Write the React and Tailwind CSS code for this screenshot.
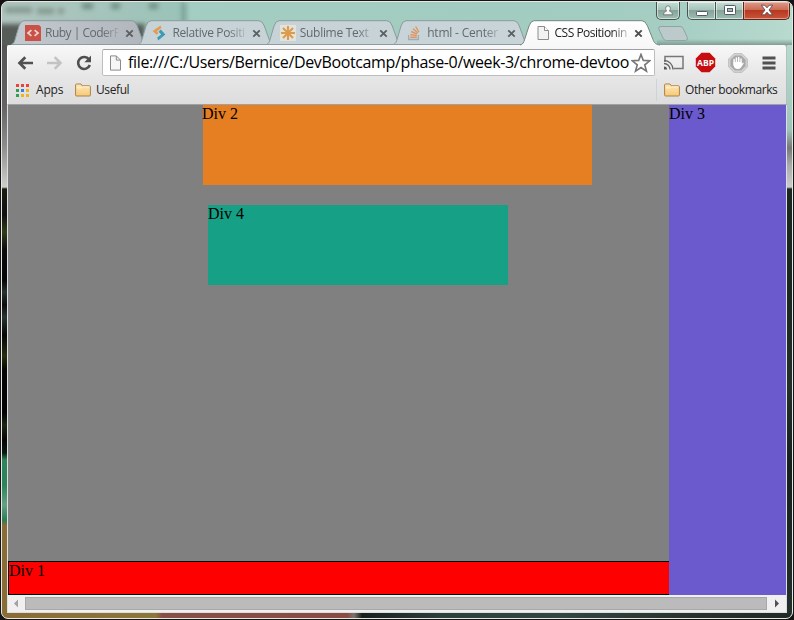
import React from "react";

const UI = "font-['Open_Sans','Noto_Sans',sans-serif]";

function CodeIcon() {
  return (
    <svg width="16" height="16" viewBox="0 0 16 16" className="shrink-0">
      <path d="M0 0H14L16 2V16H0Z" fill="#cb5146" />
      <path d="M6.4 5.2L3 8L6.4 10.8M9.6 5.2L13 8L9.6 10.8" fill="none" stroke="#e8d5d5" strokeWidth="1.7" />
    </svg>
  );
}
function PenIcon() {
  return (
    <svg width="16" height="16" viewBox="0 0 16 16" className="shrink-0">
      <path d="M8.6 .4L.6 6L4.6 9.8L6.4 8L5 6.2L9.4 3Z" fill="#e69a4e" />
      <path d="M8.8 4.6L13.4 9.4L6.2 15.4L5.2 12.6L9.2 9.6L6.6 6.8Z" fill="#3d9ab2" />
    </svg>
  );
}
function AsteriskIcon() {
  return (
    <svg width="16" height="16" viewBox="0 0 16 16" className="shrink-0">
      <rect width="16" height="16" fill="#e4e3d9" />
      <path d="M8 1V15M1 8H15M3 3L13 13M13 3L3 13" stroke="#dc9b4d" strokeWidth="2.1" />
    </svg>
  );
}
function StackIcon() {
  return (
    <svg width="16" height="16" viewBox="0 0 16 16" fill="none" className="shrink-0">
      <path d="M1.6 10V14.5H11.4V10" stroke="#a5aaad" strokeWidth="1.3" />
      <path d="M3.2 12.3H9.8M3.4 9.5L9.8 10.6M4.2 6.5L10 9.2M6 3.7L10.9 8.1M8.6 1.5L11.9 7" stroke="#df9561" strokeWidth="1.4" />
    </svg>
  );
}
function PageIcon() {
  return (
    <svg width="16" height="16" viewBox="0 0 16 16" className="shrink-0">
      <path d="M3 1.5H9.5L13.5 5.5V14.5H3Z" fill="#f3f3f3" stroke="#8c8c8c" />
      <path d="M9.5 1.5V5.5H13.5" fill="#fff" stroke="#8c8c8c" />
    </svg>
  );
}
function FolderIcon() {
  return (
    <svg width="16" height="14" viewBox="0 0 16 14">
      <defs>
        <linearGradient id="folder" x1="0" y1="0" x2="0" y2="1">
          <stop offset="0" stopColor="#ffe8b8" />
          <stop offset="1" stopColor="#f5ca78" />
        </linearGradient>
      </defs>
      <path d="M.6 12V2Q.6 1 1.6 1H6L7.2 2.8H14.4Q15.4 2.8 15.4 3.8V12Q15.4 13 14.4 13H1.6Q.6 13 .6 12Z" fill="url(#folder)" stroke="#ad8148" />
      <path d="M1.6 4.8H6.5L7.8 3.9H14.4" fill="none" stroke="#fff4d8" />
    </svg>
  );
}
function Cross({ active }) {
  return (
    <svg width="9" height="9" viewBox="0 0 9 9" className="shrink-0">
      <path d="M1.3 1.3L7.7 7.7M7.7 1.3L1.3 7.7" stroke={active ? "#4d4d4d" : "#5b6062"} strokeWidth="1.9" />
    </svg>
  );
}

const tabs = [
  { title: "Ruby | CoderF", Icon: CodeIcon, fill: "url(#tabGrey)", tracking: "tracking-[-0.5px]" },
  { title: "Relative Positi", Icon: PenIcon, fill: "#c7d3d7", tracking: "tracking-[-0.34px]" },
  { title: "Sublime Text", Icon: AsteriskIcon, fill: "#c7d3d7", tracking: "tracking-[-0.3px]" },
  { title: "html - Center", Icon: StackIcon, fill: "#c8d4d8", tracking: "tracking-[-0.2px]" },
  { title: "CSS Positionin", Icon: PageIcon, fill: "url(#tabActive)", tracking: "tracking-[-0.5px]", active: true },
];

function Tab({ title, Icon, fill, tracking, active }) {
  const side = "M-1 25C2 24.5 2.8 22 3.6 19.5L8 6Q9.8.7 13 .7H121Q124.5.7 126.5 6L132 19.5C133 22.5 134.5 24.5 139 25";
  const idle = "M.5 24.5C3 23.5 3.4 21.5 4.2 19L8 6Q9.8.7 13 .7H121Q124.5.7 126.3 6L131 19C132 22 133 24 136 24.5Z";
  return (
    <div className={"relative flex h-[25px] w-[127.4px] shrink-0 items-center pl-[14px] pt-[1px] " + (active ? "z-10" : "")}>
      <svg className="absolute left-0 top-0 overflow-visible" width="138" height="25" viewBox="0 0 138 25">
        <defs>
          <linearGradient id="tabGrey"><stop offset="0" stopColor="#c2c9cf" /><stop offset="1" stopColor="#b1b6bc" /></linearGradient>
          <linearGradient id="tabActive" x1="0" y1="0" x2="0" y2="1"><stop offset="0" stopColor="#fff" /><stop offset="1" stopColor="#f8f8f8" /></linearGradient>
        </defs>
        <path d={active ? side : idle} fill={fill} stroke={active ? "#748781" : "#8b9b9f"} />
      </svg>
      <div className="relative flex w-full items-center">
        <Icon />
        <span className={"ml-[4px] w-[73px] shrink-0 whitespace-nowrap text-[12px] leading-[18px] [mask-image:linear-gradient(to_right,#000_78%,rgba(0,0,0,0.2))] " + tracking + (active ? " text-[#222]" : " text-[#626a6e]")}>
          {title}
        </span>
        <span className="ml-[6.5px] flex"><Cross active={active} /></span>
      </div>
    </div>
  );
}

function WindowButtons() {
  const glass = "flex h-[18px] items-center justify-center border-[#46544f] bg-[linear-gradient(#c4ddd5_0%,#a7c5bb_45%,#86a399_50%,#9dbdb3_100%)] shadow-[inset_0_0_0_1px_rgba(255,255,255,0.55)]";
  return (
    <div className="flex h-[18px] justify-end pr-[2px]">
      <div className={glass + " mr-[7px] w-[24px] rounded-b-[5px] border border-t-0"}>
        <svg width="12" height="12" viewBox="0 0 12 12">
          <path d="M3.6 3.4Q3.6 .8 6 .8Q8.4 .8 8.4 3.4Q8.4 4.8 7.6 5.5V6.2Q10.6 6.6 10.6 9.8H1.4Q1.4 6.6 4.4 6.2V5.5Q3.6 4.8 3.6 3.4Z" fill="#f7f7f7" stroke="#616c68" strokeWidth=".8" />
        </svg>
      </div>
      <div className={glass + " w-[29px] rounded-bl-[5px] border border-t-0"}>
        <svg width="14" height="12" viewBox="0 0 14 12"><rect x="1.5" y="6.5" width="11" height="4" rx=".8" fill="#fff" stroke="#525c65" /></svg>
      </div>
      <div className={glass + " w-[27px] border-b"}>
        <svg width="14" height="12" viewBox="0 0 14 12">
          <rect x="1.5" y=".5" width="11" height="9" rx=".8" fill="#fff" stroke="#525c65" />
          <rect x="4.5" y="3.5" width="5" height="3" fill="#a4bdb6" stroke="#525c65" />
        </svg>
      </div>
      <div className="flex h-[18px] w-[47px] items-center justify-center rounded-br-[5px] border border-t-0 border-[#5b2620] bg-[linear-gradient(#dc9c8c_0%,#cd6c55_45%,#b83820_50%,#c9543a_100%)] pb-px shadow-[inset_0_0_0_1px_rgba(255,220,205,0.5)]">
        <svg width="14" height="12" viewBox="0 0 14 12">
          <path d="M1.3 1.2H4.7L7 3.8L9.3 1.2H12.7L9 6L12.7 10.8H9.3L7 8.2L4.7 10.8H1.3L5 6Z" fill="#fff" stroke="#5a4a50" strokeWidth=".9" />
        </svg>
      </div>
    </div>
  );
}

function Toolbar() {
  return (
    <div className="flex h-[32px] items-center pt-[3px]">
      <svg className="ml-[9px] mr-px shrink-0" width="84" height="20" viewBox="0 0 84 20" fill="none">
        <path d="M16 10H2.5M8.3 4.2L2.5 10L8.3 15.8" stroke="#505050" strokeWidth="2.7" />
        <path d="M30 10H43.5M37.7 4.2L43.5 10L37.7 15.8" stroke="#c3c3c3" strokeWidth="2.5" />
        <path d="M72 6.4A6 6 0 1 0 72.8 12" stroke="#505050" strokeWidth="2.6" />
        <path d="M74 2.6V9.3H67.3Z" fill="#505050" />
      </svg>
      <div className="flex h-[27px] w-[553px] shrink-0 items-center rounded-[2px] border border-[#bdbdbd] border-t-[#a0a0a0] bg-white pl-[4px]">
        <svg width="16" height="16" viewBox="0 0 16 16" className="shrink-0">
          <path d="M3.5 .9H9.3L13.5 5.1V15.1H3.5Z" fill="#f7f7f7" stroke="#8a8a8a" />
          <path d="M9.3 1V5.1H13.4" fill="none" stroke="#8a8a8a" />
        </svg>
        <span className="mb-[2px] ml-[5px] w-[503px] shrink-0 whitespace-nowrap text-[16px] leading-[22px] tracking-[-0.36px] text-black">
          file:///C:/Users/Bernice/DevBootcamp/phase-0/week-3/chrome-devtoo
        </span>
        <svg width="20" height="20" viewBox="0 0 18 18" className="shrink-0">
          <path d="M9 1.3L11.1 6.7L16.9 7L12.4 10.7L13.9 16.3L9 13.1L4.1 16.3L5.6 10.7L1.1 7L6.9 6.7Z" fill="#fff" stroke="#777" strokeWidth="1.5" />
        </svg>
      </div>
      <svg className="ml-[9px] shrink-0" width="21" height="16" viewBox="0 0 21 16" fill="none">
        <path d="M1 7V1.5H19V13.5H9.5" stroke="#777" strokeWidth="1.5" />
        <path d="M0 5.5A9 9 0 0 1 9 14.5M0 8.5A6 6 0 0 1 6 14.5" stroke="#666" strokeWidth="1.3" />
        <path d="M0 11.5A3 3 0 0 1 3 14.5H0Z" fill="#555" />
      </svg>
      <svg className="ml-[10px] shrink-0" width="21" height="21" viewBox="0 0 21 21">
        <path d="M6.5 .8H14.5L20.2 6.5V14.5L14.5 20.2H6.5L.8 14.5V6.5Z" fill="#c80d10" />
        <text x="10.5" y="13.6" textAnchor="middle" fontSize="9" fontWeight="700" fill="#fff" textLength="17" lengthAdjust="spacingAndGlyphs">ABP</text>
      </svg>
      <svg className="ml-[11.5px] shrink-0" width="20" height="20" viewBox="0 0 20 20">
        <path d="M6 .7H14L19.3 6V14L14 19.3H6L.7 14V6Z" fill="#d5d5d5" stroke="#bbb" />
        <path d="M6.7 2.4H13.3L17.6 6.7V13.3L13.3 17.6H6.7L2.4 13.3V6.7Z" fill="#a9a9a9" />
        <path d="M6.1 6.4V12M8.4 5V10M10.7 4.5V10M13 6V12" stroke="#fff" strokeWidth="1.5" strokeLinecap="round" />
        <path d="M5.4 9H13.7V11L15 9.5L15.8 10.3L13 14.5Q12 16 9.7 16Q6.5 16 5.7 13Z" fill="#fff" />
      </svg>
      <svg className="ml-[14.5px] shrink-0" width="14" height="14" viewBox="0 0 14 14">
        <path d="M.5 2H13.5M.5 7H13.5M.5 12H13.5" stroke="#515151" strokeWidth="2.8" />
      </svg>
    </div>
  );
}

const appColors = ["bg-[#e94435]", "bg-[#e94435]", "bg-[#e94435]", "bg-[#2d9f57]", "bg-[#347fe0]", "bg-[#f2b21c]", "bg-[#2d9f57]", "bg-[#f2b21c]", "bg-[#f2b21c]"];

function Bookmarks() {
  return (
    <div className="flex h-[26px] items-center text-[12px] leading-[18px] text-[#222]">
      <div className="ml-[8px] grid grid-cols-[3px_3px_3px] grid-rows-[3px_3px_3px] gap-[2px]">
        {appColors.map((c, i) => <span key={i} className={c} />)}
      </div>
      <span className="ml-[7px] w-[27px] whitespace-nowrap tracking-[-0.2px]">Apps</span>
      <span className="ml-[12px]"><FolderIcon /></span>
      <span className="ml-[5px] tracking-[-0.4px]">Useful</span>
      <div className="ml-auto flex h-[22px] items-center border-l border-[#cbd3dd] pl-[7px]">
        <FolderIcon />
        <span className="ml-[5px] w-[101px] whitespace-nowrap tracking-[-0.41px]">Other bookmarks</span>
      </div>
    </div>
  );
}

function Page() {
  return (
    <div className="flex h-[490px] bg-[#808080] font-['Liberation_Serif',serif] text-[16px] leading-[18px] text-black">
      <div className="flex w-[661px] flex-col">
        <div className="ml-[195px] h-[80px] w-[389px] bg-[#e67e22]"><span className="-ml-px">Div 2</span></div>
        <div className="ml-[200px] mt-[20px] h-[80px] w-[300px] bg-[#16a085]">Div 4</div>
        <div className="mt-auto h-[34px] border border-r-0 border-black bg-[#ff0000]">Div 1</div>
      </div>
      <div className="w-[117px] bg-[#6a5acd]">Div 3</div>
    </div>
  );
}

function Scrollbar() {
  return (
    <div className="flex h-[17px] items-center bg-[#f0f0f0]">
      <svg width="17" height="17" viewBox="0 0 17 17"><path d="M10 4.5V12.5L6 8.5Z" fill="#a3a3a3" /></svg>
      <div className="h-[13px] grow border border-[#a8a8a8] bg-[#bbb]" />
      <svg width="19" height="17" viewBox="0 0 19 17"><path d="M8 4.5V12.5L12 8.5Z" fill="#505050" /></svg>
    </div>
  );
}

export default function App() {
  return (
    <div className={"h-[620px] w-[794px] overflow-hidden bg-[#171313] p-px " + UI}>
      <div className="flex h-[618px] w-[792px] flex-col overflow-hidden rounded-[7px] border border-[#e4e9e6] bg-[#a4cec2]">
        <header className="relative h-[43px] shrink-0">
          <svg className="absolute left-0 top-0" width="790" height="43" viewBox="0 0 790 43">
            <defs>
              <linearGradient id="glass">
                <stop offset="0" stopColor="#a4cec2" /><stop offset=".65" stopColor="#a2ccbf" />
                <stop offset=".84" stopColor="#a5cdc2" /><stop offset="1" stopColor="#b8dacf" />
              </linearGradient>
              <linearGradient id="patch">
                <stop offset="0" stopColor="#b1c5c0" /><stop offset=".6" stopColor="#a4c4bb" /><stop offset="1" stopColor="#9ac3b7" />
              </linearGradient>
              <linearGradient id="edge" x1="0" y1="0" x2="0" y2="1">
                <stop offset="0" stopColor="#809c93" stopOpacity="0" /><stop offset="1" stopColor="#809c93" />
              </linearGradient>
              <filter id="soft" x="-50%" y="-100%" width="200%" height="300%"><feGaussianBlur stdDeviation="2.4" /></filter>
            </defs>
            <rect width="790" height="43" fill="url(#glass)" />
            <rect width="182" height="24" fill="url(#patch)" />
            <g filter="url(#soft)">
              <path d="M182 0V22" stroke="#75988e" strokeWidth="4" />
              <path d="M3 8H30M35 9H52M56 9H62" stroke="#84998f" strokeWidth="6" />
              <path d="M80 4H91M109 4H118M147 4H156" stroke="#6d8e84" strokeWidth="6" />
              <rect x="-10" y="22" width="153" height="28" fill="#565b59" />
            </g>
            <rect x="655" y="37" width="135" height="6" fill="url(#edge)" />
          </svg>
          <div className="relative flex h-full flex-col">
            <WindowButtons />
            <div className="flex h-[25px] pl-[9px]">
              {tabs.map((t) => <Tab key={t.title} {...t} />)}
              <svg className="ml-[8px] mt-[5px]" width="34" height="18" viewBox="0 0 34 18">
                <path d="M5 1.5H24Q26.5 1.5 27.5 4L31.3 12.5Q32.3 15.5 29.5 15.5H10.5Q8 15.5 7 13L2.8 4Q2 1.5 5 1.5Z" fill="#bdcacb" stroke="#8fa5a0" />
              </svg>
            </div>
          </div>
        </header>
        <div className="flex h-[568px] shrink-0">
          <div className="w-[5px] bg-[linear-gradient(#555_0px,#646262_60px,#8b8b8b_100px,#d0cfca_142px,#1a1c0d_144px,#111_170px,#303d18_187px,#0b0b0b_205px,#050505_235px,#26332f_247px,#0a0d0c_260px,#2a3533_272px,#050505_290px,#262f10_311px,#050505_325px,#030303_368px,#1c2611_380px,#050505_395px,#071b12_408px,#30845a_415px,#2c8459_440px,#64a186_460px,#2c7d52_475px,#8a6d36_481px,#8a6c35_568px)]" />
          <main className="w-[780px]">
            <div className="h-[60px] rounded-t-[3px] border-b border-l border-r border-b-[#a1a1a1] border-l-white border-r-[#b5c1bd] bg-[linear-gradient(#f8f8f8_0%,#e7e7e7_50%,#dddddd_100%)] shadow-[0_-1px_0_#7b8985]">
              <Toolbar />
              <Bookmarks />
            </div>
            <div className="border border-t-0 border-[#dcdfdf]">
              <Page />
              <Scrollbar />
            </div>
          </main>
          <div className="w-[5px] bg-[linear-gradient(#b8d9cf_0px,#a3cabe_70px,#9fc4b9_85px,#777_103px,#aaa_120px,#ccc_142px,#1b2721_144px,#1b2721_250px,#25302b_340px,#17201c_420px,#24302b_568px)]" />
        </div>
        <div className="h-[5px] shrink-0 bg-[linear-gradient(90deg,#8a6c35_0px,#8d763a_154px,#865046_160px,#8a4b42_345px,#7d746e_352px,#18201e_360px,#2d403c_440px,#334641_560px,#28312e_700px,#202b26_790px)]" />
      </div>
    </div>
  );
}
